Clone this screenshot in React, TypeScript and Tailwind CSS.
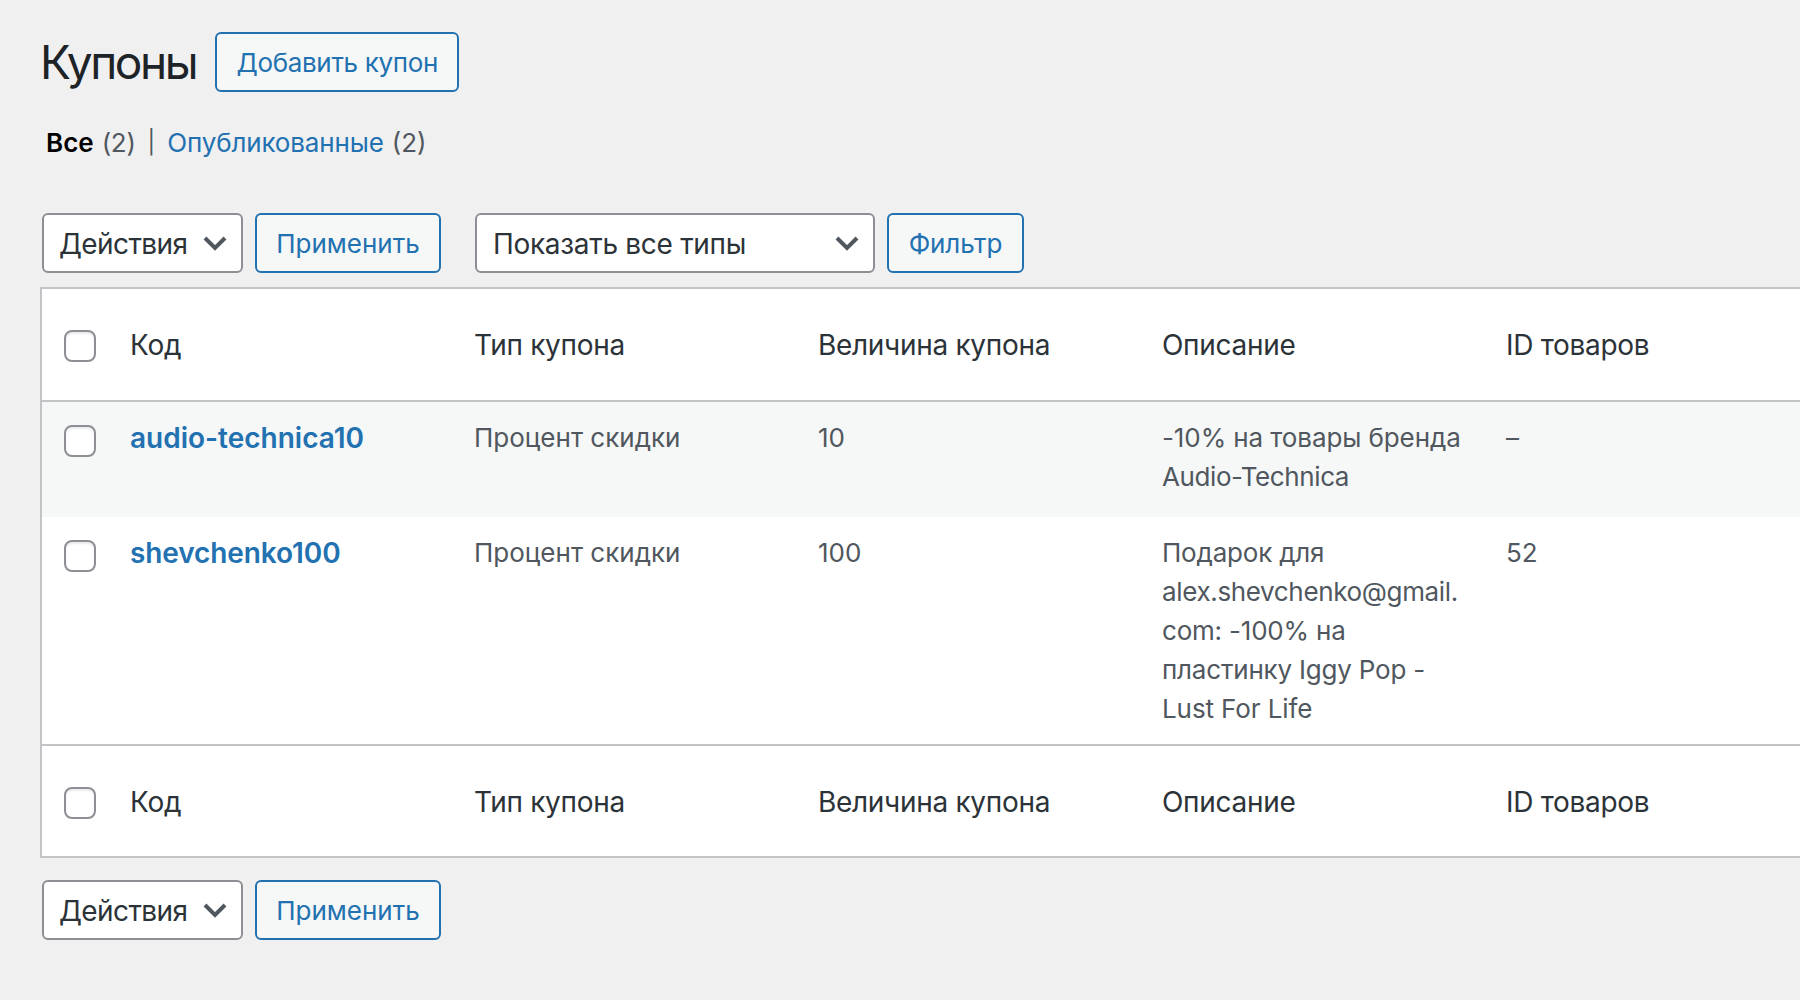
const font = { fontFamily: '"Inter", "Noto Sans", sans-serif' };

function Chevron() {
  return (
    <svg viewBox="0 0 20 20" className="w-[40px] h-[40px]" fill="none">
      <path d="M5 7.5l5 5 5-5" stroke="#50575e" strokeWidth="2" />
    </svg>
  );
}

function SelectBox({ label, className }: { label: string; className: string }) {
  return (
    <button type="button" className={"h-[60px] pr-[6px] flex items-center justify-between bg-white border-2 border-[#8c8f94] rounded-[6px] text-[28px] leading-[39px] text-[#2c3338] " + className}>
      <span className="pt-[2px]">{label}</span>
      <Chevron />
    </button>
  );
}

function OutlineButton({ label, className = "" }: { label: string; className?: string }) {
  return (
    <button type="button" className={"h-[60px] flex items-center justify-center bg-[#f6f7f7] border-2 border-[#2271b1] rounded-[6px] text-[26px] leading-[39px] text-[#2271b1] " + className}>
      {label}
    </button>
  );
}

function Check({ className = "" }: { className?: string }) {
  return <span className={"block w-[32px] h-[32px] bg-white border-2 border-[#8c8f94] rounded-[8px] shadow-[inset_0_2px_2px_rgba(0,0,0,0.08)] " + className} />;
}

const labels = ["Код", "Тип купона", "Величина купона", "Описание", "ID товаров"];

function Head({ check }: { check: string }) {
  return (
    <>
      <td className="pl-[22px]"><Check className={check} /></td>
      {labels.map((l) => (
        <td key={l} className="pl-[21px] pr-[19px] pt-[2px] text-[28px] tracking-[-0.3px] leading-[39px] text-[#2c3338]">{l}</td>
      ))}
    </>
  );
}

export default function App() {
  return (
    <div style={font} className="w-[1800px] h-[1000px] overflow-hidden bg-[#f0f0f1] text-[#2c3338]">
      <div className="pl-[40px] pt-[32px]">
        <div className="flex items-center h-[60px]">
          <h1 className="text-[46px] tracking-[-2.4px] leading-[60px] font-normal text-[#1d2327]">Купоны</h1>
          <OutlineButton label="Добавить купон" className="ml-[19px] w-[244px] tracking-[-0.33px]" />
        </div>

        <div className="mt-[31px] ml-[6px] h-[39px] flex items-center text-[26px] leading-[39px] text-[#50575e]">
          <span className="font-semibold text-black">Все</span>
          <span className="ml-[8px] tracking-[-0.3px]">(2)</span>
          <span className="ml-[12px] mr-[12px] text-[23px]">|</span>
          <a className="text-[#2271b1] tracking-[-0.15px]">Опубликованные</a>
          <span className="ml-[8px]">(2)</span>
        </div>

        <div className="mt-[51px] ml-[2px] flex items-center">
          <SelectBox label="Действия" className="w-[201px] pl-[15px] tracking-[-0.6px]" />
          <OutlineButton label="Применить" className="ml-[12px] w-[186px]" />
          <SelectBox label="Показать все типы" className="ml-[34px] w-[400px] pl-[16px] tracking-[-0.3px]" />
          <OutlineButton label="Фильтр" className="ml-[12px] w-[137px] tracking-[-0.1px]" />
        </div>

        <table className="mt-[14px] w-[1760px] table-fixed border-collapse bg-white border-y-2 border-l-2 border-[#c3c4c7]">
          <colgroup>
            <col className="w-[68px]" />
            <col className="w-[344px]" />
            <col className="w-[344px]" />
            <col className="w-[344px]" />
            <col className="w-[344px]" />
            <col />
          </colgroup>
          <thead>
            <tr className="h-[113px] border-b-2 border-[#c3c4c7] [&>td]:align-middle">
              <Head check="mt-[3px]" />
            </tr>
          </thead>
          <tbody className="text-[26px] leading-[39px] text-[#50575e] [&_td]:align-top [&_td:not(:first-child)]:pl-[21px] [&_td:not(:first-child)]:pr-[19px] [&_td:not(:first-child)]:pt-[16px]">
            <tr className="h-[116px] bg-[#f6f7f7]">
              <td className="pl-[22px] pt-[23px]"><Check /></td>
              <td><a className="block pt-[1px] text-[28px] font-semibold text-[#2271b1]">audio-technica10</a></td>
              <td>Процент скидки</td>
              <td>10</td>
              <td>
                <span className="tracking-[-0.1px]">-10% на товары бренда</span>
                <br />
                <span className="tracking-[-0.4px]">Audio-Technica</span>
              </td>
              <td>–</td>
            </tr>
            <tr className="h-[228px]">
              <td className="pl-[22px] pt-[23px]"><Check /></td>
              <td><a className="block pt-[1px] text-[28px] font-semibold tracking-[-0.1px] text-[#2271b1]">shevchenko100</a></td>
              <td>Процент скидки</td>
              <td>100</td>
              <td>
                <span className="tracking-[-0.2px]">Подарок для</span>
                <br />
                <span className="tracking-[-0.35px]">alex.shevchenko@gmail.</span>
                <br />
                <span className="tracking-[-0.2px]">com: -100% на</span>
                <br />
                <span className="tracking-[-0.2px]">пластинку Iggy Pop -</span>
                <br />
                <span className="tracking-[-0.1px]">Lust For Life</span>
              </td>
              <td>52</td>
            </tr>
          </tbody>
          <tfoot>
            <tr className="h-[112px] border-t-2 border-[#c3c4c7] [&>td]:align-middle">
              <Head check="mt-[4px]" />
            </tr>
          </tfoot>
        </table>

        <div className="mt-[22px] ml-[2px] flex items-center">
          <SelectBox label="Действия" className="w-[201px] pl-[15px] tracking-[-0.6px]" />
          <OutlineButton label="Применить" className="ml-[12px] w-[186px]" />
        </div>
      </div>
    </div>
  );
}
